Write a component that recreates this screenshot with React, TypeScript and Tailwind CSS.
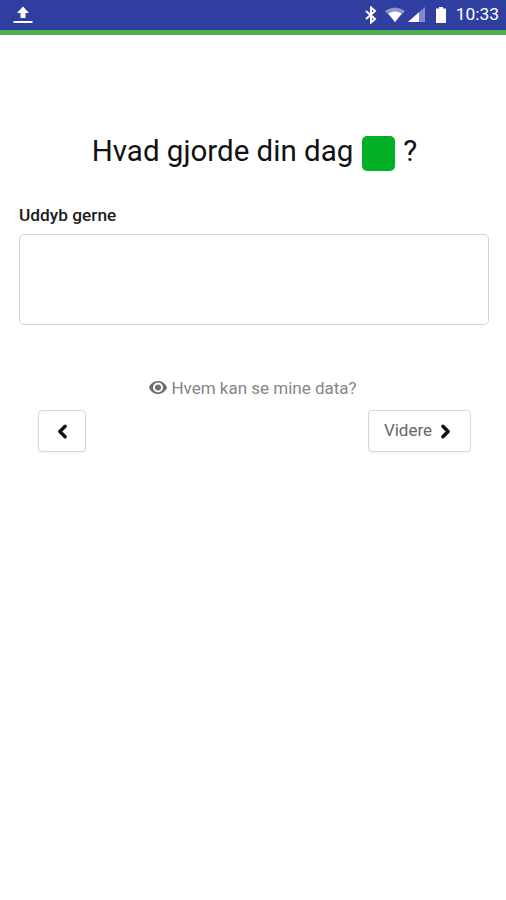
import React from 'react';
import { ChevronLeft, ChevronRight } from 'lucide-react';

const StatusBar: React.FC = () => (
  <div className="h-[30px] bg-[#303f9f] flex items-center justify-between pl-[13px] pr-[7px]">
    <svg width="20" height="18" viewBox="0 0 20 18" fill="white">
      <path d="M10 0.5 L16 7 H12.5 V12 H7.5 V7 H4 Z" />
      <rect x="0.5" y="15" width="19" height="2" />
    </svg>
    <div className="flex items-center">
      <svg width="12" height="18" viewBox="0 0 12 18" fill="none" stroke="white" strokeWidth="2">
        <path d="M1 5 L10 13 L6 16.5 V1.5 L10 5 L1 13" />
      </svg>
      <svg width="22" height="16" viewBox="0 0 22 16" className="ml-[8px]">
        <path d="M0 4 Q10 -3 20 4 L10 15 Z" fill="white" fillOpacity="0.45" />
        <path d="M3.5 6.5 Q10 2.5 16.5 6.5 L10 15 Z" fill="white" />
      </svg>
      <svg width="18" height="18" viewBox="0 0 18 18" className="ml-[1px]">
        <path d="M0 16 L17 1 V16 Z" fill="white" fillOpacity="0.4" />
        <path d="M0 16 L11 6.3 V16 Z" fill="white" />
      </svg>
      <svg width="12" height="18" viewBox="0 0 12 18" className="ml-[9px]">
        <path d="M4 1 H8 V2.5 H11 V17 H1 V2.5 H4 Z" fill="white" />
      </svg>
      <span className="ml-[9px] text-[17.4px] leading-none text-white font-['Roboto',sans-serif]">10:33</span>
    </div>
  </div>
);

export default function App() {
  return (
    <div className="w-[506px] h-[900px] bg-white font-['Roboto',sans-serif] overflow-hidden">
      <StatusBar />
      <div className="h-[5px] bg-[#4caf50]" />

      <div className="pt-[98px] px-[19px]">
        <h1 className="flex items-center justify-center pl-[3px] text-[29.5px] leading-[36px] text-[#111]">
          <span>Hvad gjorde din dag</span>
          <span className="w-[33px] h-[35px] rounded-[5px] bg-[#00b126] ml-[9px] mr-[8px] translate-y-[2px]" />
          <span>?</span>
        </h1>

        <label className="block mt-[36px] text-[17.3px] leading-[20px] font-medium text-[#1c1c1c]">Uddyb gerne</label>
        <div className="mt-[9px] w-[470px] h-[91px] rounded-[5px] border border-[#d2d4d6]" />

        <div className="mt-[52px] flex items-center justify-center text-[17px] leading-[22px] text-[#868686]">
          <svg width="18" height="13" viewBox="0 0 18 13" className="mr-[4px] mb-[2px]" fill="#6e6e6e">
            <path fillRule="evenodd" d="M9 0 C13 0 16.5 2.6 18 6.5 C16.5 10.4 13 13 9 13 C5 13 1.5 10.4 0 6.5 C1.5 2.6 5 0 9 0 Z M9 1.5 A5 5 0 1 0 9 11.5 A5 5 0 1 0 9 1.5 Z M9 3.5 A3 3 0 1 1 9 9.5 A3 3 0 1 1 9 3.5 Z" />
          </svg>
          <span>Hvem kan se mine data?</span>
        </div>

        <div className="mt-[11px] flex justify-between pl-[19px] pr-[16px]">
          <button className="w-[48px] h-[42px] flex items-center justify-center rounded-[4px] border border-[#d5d8da] bg-white shadow-[0_1px_1px_rgba(0,0,0,0.05)]">
            <ChevronLeft size={21} strokeWidth={4} className="text-[#111]" />
          </button>
          <button className="w-[103px] h-[42px] flex items-center justify-center gap-[3px] pl-[1px] rounded-[4px] border border-[#d5d8da] bg-white text-[17px] text-[#666] shadow-[0_1px_1px_rgba(0,0,0,0.05)]">
            <span>Videre</span>
            <ChevronRight size={21} strokeWidth={4} className="text-[#111]" />
          </button>
        </div>
      </div>
    </div>
  );
}
